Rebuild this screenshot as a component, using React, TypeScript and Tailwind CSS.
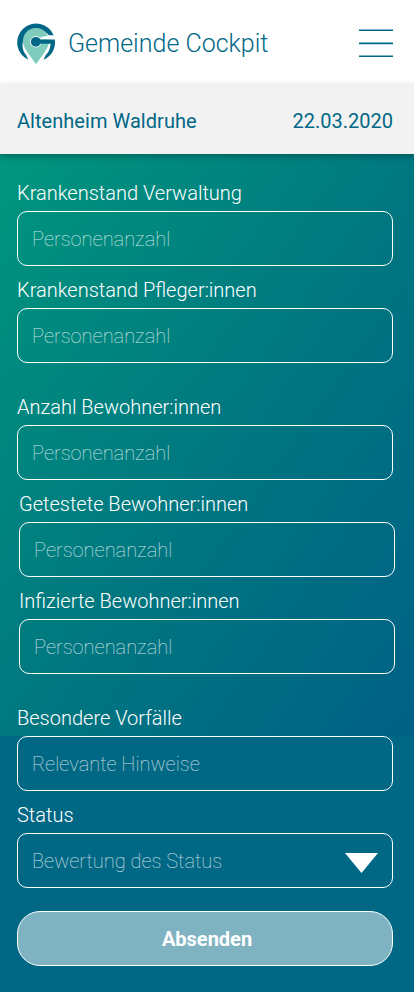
import React from "react";

const fontStack = "font-[Roboto,'Liberation_Sans',sans-serif]";

function Logo() {
  return (
    <svg width="38" height="42" viewBox="0 0 38 42" className="shrink-0" aria-hidden="true">
      <path
        d="M36.8 12.400A19 19 0 1 0 11.300 36.800L9.200 32.200A14.800 14.800 0 1 1 32.200 12.400z"
        fill="#006786"
      />
      <path
        d="M19 4.900C11.500 4.900 6 10.800 6 18c0 5 2.600 8.500 5.300 12.400 2.600 3.700 4.800 6.800 7.700 10.800 2.900-4 5.100-7.100 7.700-10.800C29.400 26.500 32 23 32 18c0-7.200-5.500-13.100-13-13.100z"
        fill="#80ccbc"
      />
      <path d="M23.500 14.200l8-1.800H38v4.200H23.500z" fill="#fff" />
      <circle cx="18.800" cy="18.800" r="5.700" fill="#fff" />
      <circle cx="18.800" cy="18.800" r="4.900" fill="#006786" />
      <path
        d="M19 16.600h18.800c1.200 8.800-3.200 16.600-11.300 20.200l2.300-4.800c2.700-2.300 4.300-5.600 4.900-11.200H19z"
        fill="#006786"
      />
    </svg>
  );
}

function Field({
  label,
  placeholder,
  select = false,
  className = "",
}: {
  label: string;
  placeholder: string;
  select?: boolean;
  className?: string;
}) {
  return (
    <label className={`block ${className}`}>
      <span className="block pt-3 pb-1.5 text-[20px] leading-6 font-light whitespace-nowrap text-white">
        {label}
      </span>
      <span className="flex h-[55px] w-[376px] items-center justify-between rounded-[10px] border border-white pr-[14px] pl-[14px]">
        {select ? (
          <>
            <span className="text-[20px] leading-6 font-thin text-white/80">{placeholder}</span>
            <svg width="33" height="20" viewBox="0 0 33 20" className="mt-[5px]" aria-hidden="true">
              <path d="M0 0h33L16.500 20z" fill="#fff" />
            </svg>
          </>
        ) : (
          <input
            placeholder={placeholder}
            className="w-full bg-transparent text-[20px] leading-6 font-thin text-white outline-none placeholder:text-white/80"
          />
        )}
      </span>
    </label>
  );
}

export default function App() {
  return (
    <div className={`flex h-[992px] w-[414px] flex-col overflow-hidden bg-[#006784] ${fontStack}`}>
      <div className="flex h-full flex-col bg-[linear-gradient(to_bottom_right,#00967e,#007780_52%,#006086)] bg-[length:414px_582px] bg-[position:0_154px] bg-no-repeat">
        <header className="flex h-[83px] shrink-0 items-center justify-between bg-white pr-[21px] pl-[17px]">
          <div className="flex items-center gap-[13px] pt-[4px]">
            <Logo />
            <h1 className="text-[25px] leading-8 font-light text-[#006786]">Gemeinde Cockpit</h1>
          </div>
          <button aria-label="Menü" className="mt-[3px]">
            <svg width="34" height="28" viewBox="0 0 34 28" className="block" aria-hidden="true">
              <path d="M0 1.300h34M0 14.400h34M0 27.200h34" stroke="#006786" strokeWidth="1.600" />
            </svg>
          </button>
        </header>
        <div className="flex h-[71px] shrink-0 items-center justify-between bg-[#f2f2f2] pt-[5px] pr-[21px] pl-[17px] text-[20px] leading-6 text-[#006786] shadow-[0_3px_6px_rgba(0,0,0,0.25)]">
          <span className="tracking-[0.040px]">Altenheim Waldruhe</span>
          <time>22.03.2020</time>
        </div>
        <form className="flex flex-col pt-[15px] pl-[17px]">
          <Field label="Krankenstand Verwaltung" placeholder="Personenanzahl" />
          <Field label="Krankenstand Pfleger:innen" placeholder="Personenanzahl" />
          <Field label="Anzahl Bewohner:innen" placeholder="Personenanzahl" className="mt-5" />
          <Field label="Getestete Bewohner:innen" placeholder="Personenanzahl" className="ml-0.5" />
          <Field label="Infizierte Bewohner:innen" placeholder="Personenanzahl" className="ml-0.5" />
          <Field label="Besondere Vorfälle" placeholder="Relevante Hinweise" className="mt-5" />
          <Field label="Status" placeholder="Bewertung des Status" select />
          <button
            type="button"
            className="mt-[23px] h-[55px] w-[376px] rounded-[23px] border border-white bg-white/50 pl-1 text-[20px] font-bold text-white"
          >
            Absenden
          </button>
        </form>
      </div>
    </div>
  );
}
